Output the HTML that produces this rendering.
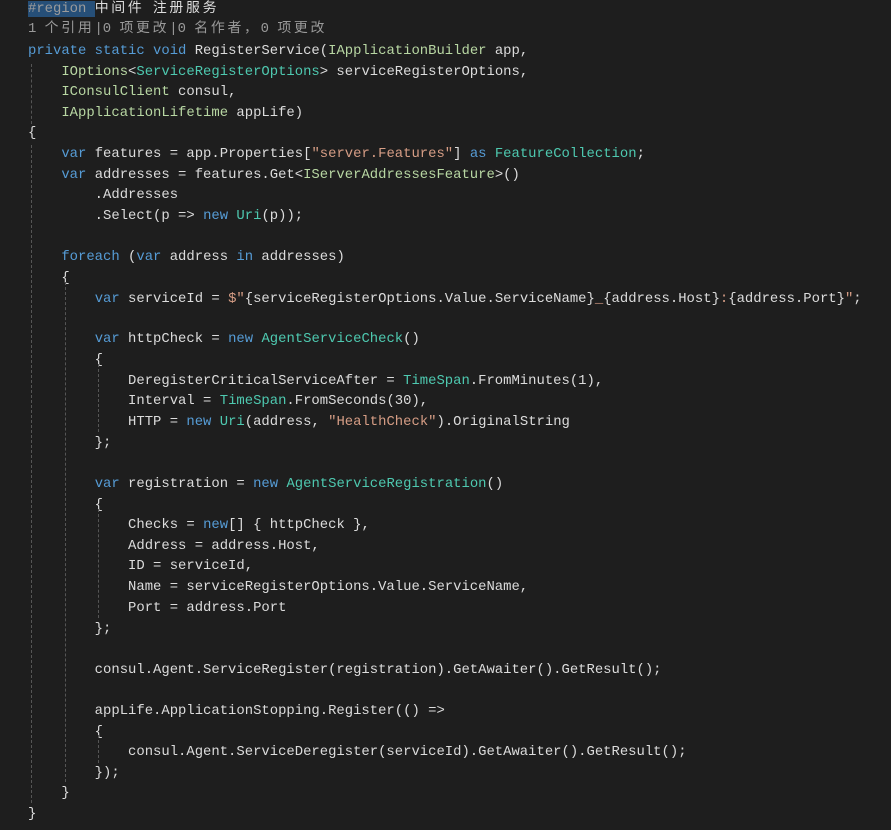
<!DOCTYPE html><html><head><meta charset="utf-8"><style>
body{margin:0;background:#1e1e1e;width:891px;height:828px;overflow:hidden;position:relative;font-family:"Liberation Mono","Noto Sans CJK SC",monospace;font-size:13.9px;color:#dcdcdc}
#w{position:absolute;left:0;top:2px;width:891px;height:828px}
.l{position:absolute;left:28px;height:20px;line-height:20px;white-space:pre}
.k{color:#569cd6}.t{color:#4ec9b0}.i{color:#b8d7a3}.s{color:#d69d85}.g{color:#999}
.r{background:#264f78;color:#9b9b9b}
.cl{color:#999}
.c{letter-spacing:2.7px}
.v{position:absolute;width:0;border-left:1px dashed #555}
</style></head><body><div id="w">
<div class="l" style="top:-3px"><span class="r">#region </span><span class="c">中间件</span> <span class="c">注册服务</span></div>
<div class="l cl" style="top:17px">1 <span class="c">个引用</span>|0 <span class="c">项更改</span>|0 <span class="c">名作者，</span>0 <span class="c">项更改</span></div>
<div class="l" style="top:39px"><span class="k">private static void</span> RegisterService(<span class="i">IApplicationBuilder</span> app,</div>
<div class="l" style="top:60px">    <span class="i">IOptions</span>&lt;<span class="t">ServiceRegisterOptions</span>&gt; serviceRegisterOptions,</div>
<div class="l" style="top:80px">    <span class="i">IConsulClient</span> consul,</div>
<div class="l" style="top:101px">    <span class="i">IApplicationLifetime</span> appLife)</div>
<div class="l" style="top:121px">{</div>
<div class="l" style="top:142px">    <span class="k">var</span> features = app.Properties[<span class="s">"server.Features"</span>] <span class="k">as</span> <span class="t">FeatureCollection</span>;</div>
<div class="l" style="top:163px">    <span class="k">var</span> addresses = features.Get&lt;<span class="i">IServerAddressesFeature</span>&gt;()</div>
<div class="l" style="top:183px">        .Addresses</div>
<div class="l" style="top:204px">        .Select(p =&gt; <span class="k">new</span> <span class="t">Uri</span>(p));</div>
<div class="l" style="top:245px">    <span class="k">foreach</span> (<span class="k">var</span> address <span class="k">in</span> addresses)</div>
<div class="l" style="top:266px">    {</div>
<div class="l" style="top:287px">        <span class="k">var</span> serviceId = <span class="s">$"</span>{serviceRegisterOptions.Value.ServiceName}<span class="s">_</span>{address.Host}<span class="s">:</span>{address.Port}<span class="s">"</span>;</div>
<div class="l" style="top:327px">        <span class="k">var</span> httpCheck = <span class="k">new</span> <span class="t">AgentServiceCheck</span>()</div>
<div class="l" style="top:348px">        {</div>
<div class="l" style="top:369px">            DeregisterCriticalServiceAfter = <span class="t">TimeSpan</span>.FromMinutes(1),</div>
<div class="l" style="top:389px">            Interval = <span class="t">TimeSpan</span>.FromSeconds(30),</div>
<div class="l" style="top:410px">            HTTP = <span class="k">new</span> <span class="t">Uri</span>(address, <span class="s">"HealthCheck"</span>).OriginalString</div>
<div class="l" style="top:431px">        };</div>
<div class="l" style="top:472px">        <span class="k">var</span> registration = <span class="k">new</span> <span class="t">AgentServiceRegistration</span>()</div>
<div class="l" style="top:493px">        {</div>
<div class="l" style="top:513px">            Checks = <span class="k">new</span>[] { httpCheck },</div>
<div class="l" style="top:534px">            Address = address.Host,</div>
<div class="l" style="top:554px">            ID = serviceId,</div>
<div class="l" style="top:575px">            Name = serviceRegisterOptions.Value.ServiceName,</div>
<div class="l" style="top:596px">            Port = address.Port</div>
<div class="l" style="top:617px">        };</div>
<div class="l" style="top:658px">        consul.Agent.ServiceRegister(registration).GetAwaiter().GetResult();</div>
<div class="l" style="top:699px">        appLife.ApplicationStopping.Register(() =&gt;</div>
<div class="l" style="top:720px">        {</div>
<div class="l" style="top:740px">            consul.Agent.ServiceDeregister(serviceId).GetAwaiter().GetResult();</div>
<div class="l" style="top:761px">        });</div>
<div class="l" style="top:781px">    }</div>
<div class="l" style="top:802px">}</div>
<div class="v" style="left:31px;top:62px;height:60px"></div>
<div class="v" style="left:31px;top:143px;height:658px"></div>
<div class="v" style="left:65px;top:280px;height:500px"></div>
<div class="v" style="left:98px;top:362px;height:68px"></div>
<div class="v" style="left:98px;top:507px;height:109px"></div>
<div class="v" style="left:98px;top:733px;height:28px"></div>
</div></body></html>
